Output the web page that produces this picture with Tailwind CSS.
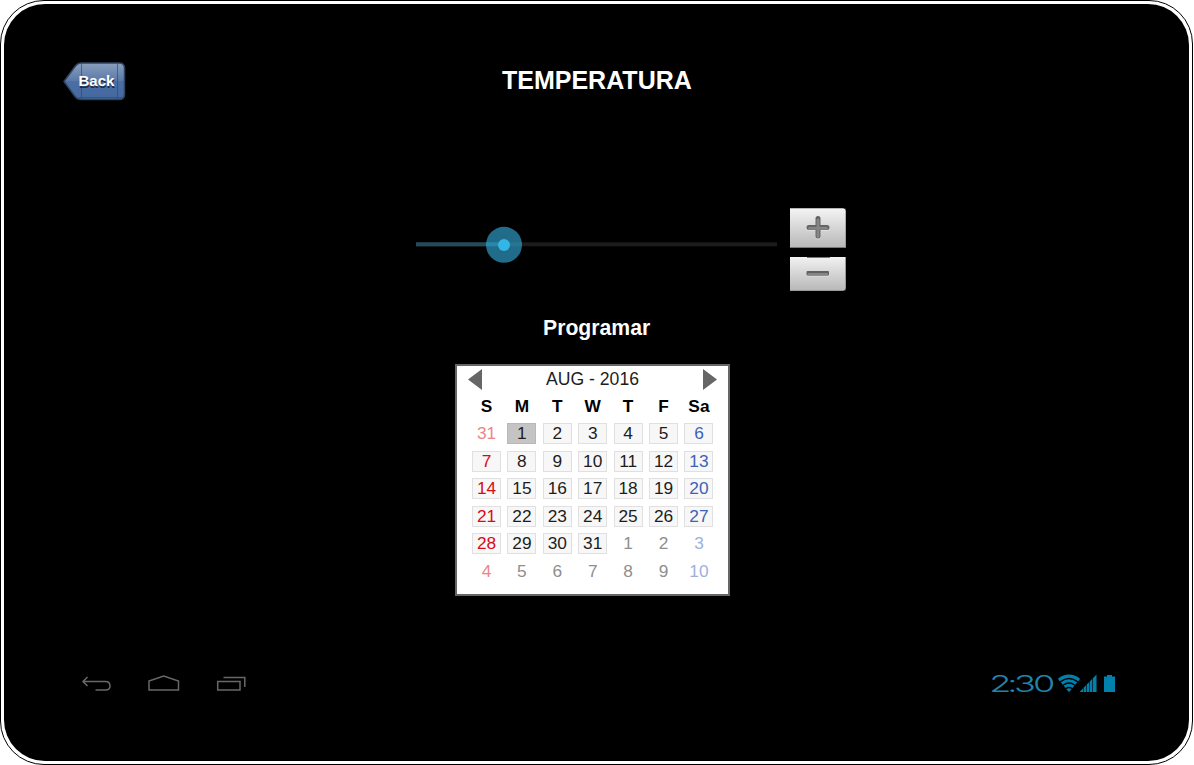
<!DOCTYPE html>
<html lang="es">
<head>
<meta charset="utf-8">
<title>Temperatura</title>
<script src="https://cdn.jsdelivr.net/npm/@tailwindcss/browser@4"></script>
</head>
<body class="h-[765px] w-[1194px] overflow-hidden bg-white font-['Liberation_Sans',Arial,sans-serif]">
<div class="h-[765px] w-[1193px] rounded-[44px] border border-black bg-white p-[3px]">
<main class="flex h-[757px] w-[1185px] flex-col overflow-hidden rounded-[41px] bg-black">
  <header class="mt-[57px] grid h-10 grid-cols-[498px_auto_1fr]">
    <button class="ml-[59px] h-10 w-[63px]" aria-label="Back">
      <svg class="block" width="63" height="40" viewBox="0 0 63 40">
        <defs><linearGradient id="back" x1="0" y1="0" x2="0" y2="1"><stop offset="0" stop-color="#8a9fbd"/><stop offset=".48" stop-color="#5a7aaa"/><stop offset=".5" stop-color="#4a6ea5"/><stop offset="1" stop-color="#466a9f"/></linearGradient></defs>
        <path d="M1 20.500 L12 5.500 Q14.500 2 18 2 H56 Q61.500 2 61.500 7 V33.500 Q61.500 38.500 56 38.500 H18 Q14.500 38.500 12 35.500Z" fill="url(#back)" stroke="#30435f" stroke-width="1.500"/>
        <path d="M18.500 3V38M54.500 3V38M16 36.500H59" stroke="#2f496f" stroke-width="1" opacity=".65"/>
        <text x="16" y="26.500" font-size="15" font-weight="700" fill="#1d2e49" aria-hidden="true">Back</text>
        <text x="15.500" y="25" font-size="15" font-weight="700" fill="#fff">Back</text>
      </svg>
    </button>
    <h1 class="pt-[4px] text-[25px] leading-[30px] font-bold whitespace-nowrap text-white">TEMPERATURA</h1>
  </header>

  <section class="mt-[107px] ml-[412px] flex h-[84px]">
    <svg class="block" width="374" height="84" viewBox="0 0 374 84">
      <rect y="34.300" width="361" height="4" fill="#1b1b1b"/>
      <rect y="34.300" width="88" height="4" fill="#234b5c"/>
      <circle cx="88" cy="36.800" r="18" fill="#216c8a"/>
      <path d="M70 36.300H88" stroke="#2b87a9" stroke-width="4"/>
      <path d="M88 36.300H106" stroke="#28758f" stroke-width="4"/>
      <circle cx="88" cy="37" r="6" fill="#33b5e5"/>
    </svg>
    <div class="flex w-14 flex-col gap-[9px]">
      <button class="h-10 bg-gradient-to-b from-[#f5f5f5] to-[#b7b7b7]" aria-label="+">
        <svg class="block" width="56" height="40" viewBox="0 0 56 40">
          <path d="M0 .5H56M55.500 0V40" stroke="#777" opacity=".5"/><path d="M0 39.500H56" stroke="#777"/><path d="M53 0h3v3q0-2-3-3" fill="#222"/>
          <path d="M28 10.500V29M18.500 20.500H37.500" stroke="#eee" stroke-width="5" stroke-linecap="round" opacity=".5"/>
          <path d="M28 10.500V28M19 19.500H37" stroke="#626262" stroke-width="5" stroke-linecap="round"/>
          <path d="M28 12V28.500M19.500 20.300H36.500" stroke="#858585" stroke-width="3" stroke-linecap="round"/>
        </svg>
      </button>
      <button class="h-[34px] bg-gradient-to-b from-[#f2f2f2] to-[#b7b7b7]" aria-label="−">
        <svg class="block" width="56" height="34" viewBox="0 0 56 34">
          <path d="M17 .500H40" stroke="#777"/><path d="M0 33.500H56M55.500 0V34" stroke="#999"/><path d="M53 34h3v-3q0 2-3 3" fill="#222"/>
          <rect x="16" y="14" width="23.500" height="5.500" rx="2" fill="#ddd"/>
          <rect x="16.500" y="14" width="22.500" height="4.500" rx="1" fill="#606060"/>
          <rect x="17.500" y="16" width="20.500" height="2.500" rx="1" fill="#858585"/>
        </svg>
      </button>
    </div>
  </section>

  <h2 class="mt-[24px] h-6 pl-[539px] text-[21.200px] leading-6 font-bold text-white">Programar</h2>

  <section class="mt-[24px] ml-[451px] h-[232px] w-[275px] border-2 border-[#666] bg-white text-[#1d1d1d]">
    <div class="flex h-[27px] items-center justify-between px-[11px]">
      <svg width="14" height="21" viewBox="0 0 14 21"><path d="M14 0V21L0 10.500Z" fill="#666"/></svg>
      <span class="pb-[2px] text-[17.600px] leading-5">AUG - 2016</span>
      <svg width="14" height="21" viewBox="0 0 14 21"><path d="M0 0V21L14 10.500Z" fill="#666"/></svg>
    </div>
    <div id="days" class="ml-[15px] grid w-[241.500px] grid-cols-[repeat(7,29px)] justify-between text-center text-[17.300px]">
      <b class="h-[30px] leading-[27px] text-black">S</b><b class="leading-[27px] text-black">M</b><b class="leading-[27px] text-black">T</b><b class="leading-[27px] text-black">W</b><b class="leading-[27px] text-black">T</b><b class="leading-[27px] text-black">F</b><b class="leading-[27px] text-black">Sa</b>
    </div>
  </section>

  <footer class="mt-[76px] flex h-6 items-start pl-[77px]">
    <svg class="block" width="166" height="24" viewBox="0 0 166 24" fill="none" stroke="#686868" stroke-width="1.500">
      <path d="M6.500 5L2 9.500L6.500 14M2 9.500H24.500Q29 9.500 29 14Q29 18 24.500 18H14.500"/>
      <path d="M68 9L82.700 4L97.500 9V18H68Z"/>
      <path d="M136.700 9.500H159V18H136.700ZM142.500 5.500H163.800V15"/>
    </svg>
    <svg class="ml-[742px] block overflow-visible" width="128" height="24" viewBox="0 0 128 24">
      <text x="0.2 11.600 16 28" y="20" transform="scale(1.57 1)" font-family="Inter, sans-serif" font-weight="300" font-size="23" fill="#2383a8">2:30</text>
      <g fill="none" stroke="#0080ab" stroke-width="3">
        <path d="M69.800 8Q80 .3 90.200 8M72.800 11.500Q80 6 87.200 11.500M75.500 14.800Q80 11.600 84.500 14.800"/>
      </g>
      <path d="M77.300 17.200Q80 15.300 82.700 17.200L80 20Z" fill="#0080ab"/>
      <path d="M91 19.500L107.500 2.500V20H91Z" fill="#0080ab"/>
      <path d="M94.500 15V20M97.500 12V20M100.500 9V20M103.500 6V20" stroke="#001e28" stroke-width=".8"/>
      <path d="M115 4.500h3V3h5V4.500h3v15.500h-11Z" fill="#0080ab"/>
    </svg>
  </footer>
</main>
</div>
<script>
  // Calendar cells: last day of July, August 2016, first days of September.
  const grid = document.getElementById('days');
  for (let i = 0; i < 42; i++) {
    const d = new Date(2016, 6, 31 + i);
    const inMonth = d.getMonth() === 7;
    const cell = document.createElement('div');
    let box = 'mb-[6.500px] h-[21px] leading-[18px] border ';
    if (!inMonth) box += 'border-transparent ';
    else if (d.getDate() === 1) box += 'border-[#b8b8b8] bg-[#c4c4c4] ';
    else box += 'border-[#e0e0e0] bg-[#f7f7f7] ';
    if (i % 7 === 0) box += inMonth ? 'text-[#d90b14]' : 'text-[#eb8589]';
    else if (i % 7 === 6) box += inMonth ? 'text-[#3c63b6]' : 'text-[#9db1dc]';
    else box += inMonth ? 'text-[#1d1d1d]' : 'text-[#8e8e8e]';
    cell.className = box;
    cell.textContent = d.getDate();
    grid.appendChild(cell);
  }
</script>
</body>
</html>
